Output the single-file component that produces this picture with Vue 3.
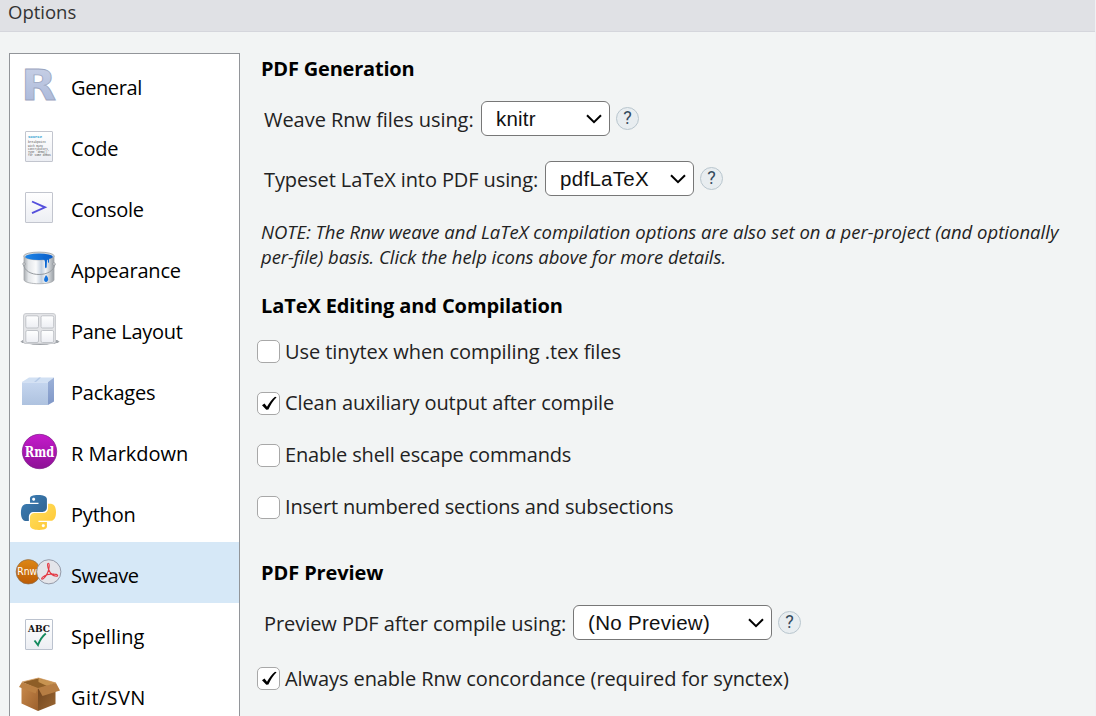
<script setup>
import { ref } from 'vue'

const selected = ref('sweave')
const sections = [
  { id: 'general', label: 'General' },
  { id: 'code', label: 'Code' },
  { id: 'console', label: 'Console' },
  { id: 'appearance', label: 'Appearance' },
  { id: 'panes', label: 'Pane Layout' },
  { id: 'packages', label: 'Packages' },
  { id: 'rmarkdown', label: 'R Markdown' },
  { id: 'python', label: 'Python' },
  { id: 'sweave', label: 'Sweave' },
  { id: 'spelling', label: 'Spelling' },
  { id: 'git', label: 'Git/SVN' },
]
const editing = ref([
  { id: 'tinytex', label: 'Use tinytex when compiling .tex files', on: false },
  { id: 'clean', label: 'Clean auxiliary output after compile', on: true },
  { id: 'shell', label: 'Enable shell escape commands', on: false },
  { id: 'numbered', label: 'Insert numbered sections and subsections', on: false },
])
const concordance = ref(true)
</script>

<template>
  <div class="dialog">
    <header class="title">Options</header>
    <div class="body">
      <nav class="sidebar">
        <div v-for="s in sections" :key="s.id" class="item" :class="[s.id, { active: s.id === selected }]" @click="selected = s.id">
          <svg class="icon" width="61" height="61" viewBox="0 0 61 61">
            <defs>
              <linearGradient :id="s.id + '-paper'" x1="0" y1="0" x2="0" y2="1">
                <stop offset="0" stop-color="#ffffff" /><stop offset="1" stop-color="#eceef3" />
              </linearGradient>
            </defs>
            <template v-if="s.id === 'general'">
              <defs>
                <linearGradient id="rfill" x1="0" y1="0" x2="0" y2="1">
                  <stop offset="0" stop-color="#cbd3e7" /><stop offset="1" stop-color="#a7b5d8" />
                </linearGradient>
              </defs>
              <text x="11.300" y="46.300" class="r-glyph" fill="url(#rfill)" stroke="#9aa5c0" stroke-width=".8" textLength="35" lengthAdjust="spacingAndGlyphs">R</text>
            </template>
            <template v-else-if="s.id === 'code'">
              <rect x="15.5" y="16.500" width="27" height="30" rx=".5" fill="url(#code-paper)" stroke="#c2c5ce" />
              <g class="tiny">
                <text x="18" y="23" class="tiny-head" textLength="14" lengthAdjust="spacingAndGlyphs">source</text>
                <text x="18" y="28.400" textLength="18" lengthAdjust="spacingAndGlyphs">breakpoint</text>
                <text x="18" y="31.600" textLength="15" lengthAdjust="spacingAndGlyphs">with many</text>
                <text x="18" y="34.800" textLength="20" lengthAdjust="spacingAndGlyphs">contributors</text>
                <text x="18" y="38" textLength="21" lengthAdjust="spacingAndGlyphs">Type 'demo()'</text>
                <text x="18" y="41" textLength="23" lengthAdjust="spacingAndGlyphs">for some demos</text>
              </g>
            </template>
            <template v-else-if="s.id === 'console'">
              <rect x="15.500" y="16.500" width="27" height="30" rx=".5" fill="url(#console-paper)" stroke="#c2c5ce" />
              <path d="M22 25.500 35 31.300 22 37.200" fill="none" stroke="#5550dc" stroke-width="1.900" />
            </template>
            <template v-else-if="s.id === 'appearance'">
              <defs>
                <linearGradient id="tin" x1="0" x2="1">
                  <stop offset="0" stop-color="#a9adb1" /><stop offset=".15" stop-color="#e3e6e9" />
                  <stop offset=".4" stop-color="#fafbfc" /><stop offset=".58" stop-color="#c4d0de" />
                  <stop offset=".72" stop-color="#f2f4f6" /><stop offset="1" stop-color="#999fa5" />
                </linearGradient>
                <linearGradient id="paint" x1="0" x2="1">
                  <stop offset="0" stop-color="#1d86e8" /><stop offset="1" stop-color="#0b5dc8" />
                </linearGradient>
              </defs>
              <path d="M14 19v24c1.500 5 28.500 5 30 0V19z" fill="url(#tin)" stroke="#a3a7ab" stroke-width=".8" />
              <ellipse cx="29" cy="19" rx="15.300" ry="3.900" fill="#d8dbdd" stroke="#9b9fa3" stroke-width=".8" />
              <ellipse cx="29" cy="19.700" rx="13.800" ry="3.200" fill="url(#paint)" />
              <path d="M33 20h6v5q-.2 2-1 0l-.2-2q-.7-1-.8 0l-.3 7q-.9 2.500-1.700 0V25q-.3-3-2-3z" fill="#0d68d2" />
              <path d="M36 38c3 3 2.800 6.500 0 7-2.600-.8-2.500-3 0-7" fill="#1673dd" />
              <path d="M13.500 27c1 14 30 14 31.500 0" fill="none" stroke="#969ba0" stroke-width="1" />
              <circle cx="14" cy="27" r="1.200" fill="#fff" stroke="#888d92" stroke-width=".8" />
              <circle cx="44" cy="27" r="1.200" fill="#fff" stroke="#888d92" stroke-width=".8" />
            </template>
            <template v-else-if="s.id === 'panes'">
              <defs>
                <radialGradient id="shade"><stop offset="0" stop-color="#83878c" /><stop offset=".9" stop-color="#a2a6ab" /><stop offset="1" stop-color="#fff" stop-opacity="0" /></radialGradient>
              </defs>
              <ellipse cx="30" cy="43.600" rx="20.500" ry="3.500" fill="url(#shade)" />
              <rect x="13.500" y="15.500" width="32" height="30" rx="2.500" fill="#e3e4e7" stroke="#cbcdd1" />
              <g fill="url(#panes-paper)" stroke="#c0c3c8">
                <rect x="15.800" y="17.800" width="12.700" height="12.200" rx="1.500" /><rect x="31" y="17.800" width="12.700" height="12.200" rx="1.500" />
                <rect x="15.800" y="32.500" width="12.700" height="12" rx="1.500" /><rect x="31" y="32.500" width="12.700" height="12" rx="1.500" />
              </g>
            </template>
            <template v-else-if="s.id === 'packages'">
              <defs>
                <linearGradient id="front" x1="0" y1="0" x2="0" y2="1"><stop offset="0" stop-color="#c5d6ef" /><stop offset="1" stop-color="#aec2df" /></linearGradient>
                <linearGradient id="side" x1="0" y1="0" x2="0" y2="1"><stop offset="0" stop-color="#9cb1d8" /><stop offset="1" stop-color="#7f97c7" /></linearGradient>
              </defs>
              <path d="M12 23 19 18.500H44L38 23z" fill="#d1e0f3" />
              <path d="M24 23 29 18.500h2L26 23z" fill="#b3c8e6" />
              <path d="M12 23H38V46H12z" fill="url(#front)" />
              <path d="M38 23 44 18.500V42.500L38 46z" fill="url(#side)" />
              <path d="M12 23.400H38" stroke="#dbe6f5" stroke-width=".8" />
            </template>
            <template v-else-if="s.id === 'rmarkdown'">
              <defs>
                <linearGradient id="plum" x1="0" y1="0" x2="0" y2="1"><stop offset="0" stop-color="#c41acb" /><stop offset="1" stop-color="#8e1196" /></linearGradient>
              </defs>
              <circle cx="29.500" cy="31.500" r="17.200" fill="url(#plum)" stroke="#7d1d86" stroke-width=".7" />
              <text x="14.800" y="36.500" class="rmd" textLength="29.400" lengthAdjust="spacingAndGlyphs">Rmd</text>
            </template>
            <template v-else-if="s.id === 'python'">
              <defs>
                <linearGradient id="pyblue" x1="0" y1="0" x2="1" y2="1"><stop offset="0" stop-color="#3d80b8" /><stop offset="1" stop-color="#2d5e8b" /></linearGradient>
                <linearGradient id="pyyellow" x1="0" y1="0" x2="1" y2="1"><stop offset="0" stop-color="#ffe060" /><stop offset="1" stop-color="#ffc632" /></linearGradient>
              </defs>
              <g transform="translate(11 14) scale(1.455)">
                <path fill="url(#pyblue)" d="M14.250.18l.9.200.730.260.590.300.450.320.340.340.250.340.160.330.100.300.040.260.020.200-.010.130V8.500l-.050.630-.130.550-.210.460-.260.380-.300.310-.330.250-.350.190-.350.140-.330.100-.300.070-.260.040-.210.020H8.770l-.690.050-.590.140-.500.220-.410.270-.330.320-.270.350-.200.360-.150.370-.100.350-.070.320-.040.270-.020.210v3.060H3.170l-.210-.030-.280-.070-.320-.120-.350-.180-.360-.260-.360-.360-.350-.460-.320-.590-.280-.730-.210-.880-.140-1.050-.050-1.230.060-1.220.160-1.040.240-.870.320-.710.360-.570.400-.440.420-.330.420-.240.400-.160.360-.100.320-.050.240-.010h.160l.060.010h8.160v-.830H6.180l-.010-2.750-.020-.370.050-.340.110-.310.170-.280.250-.260.310-.230.380-.200.440-.180.510-.150.580-.120.640-.100.710-.060.770-.040.840-.020 1.270.050zm-6.300 1.980l-.230.330-.080.410.080.410.230.340.330.220.410.090.410-.090.330-.220.230-.340.080-.410-.080-.410-.230-.330-.330-.220-.410-.090-.410.090z" />
                <path fill="url(#pyyellow)" d="M21.040 6.110l.280.060.320.120.350.180.360.270.360.350.350.470.320.590.280.730.210.880.140 1.040.050 1.230-.060 1.230-.160 1.040-.240.860-.320.710-.360.570-.400.450-.420.330-.420.240-.400.160-.360.090-.320.050-.240.020-.160-.010h-8.220v.820h5.840l.010 2.760.020.360-.050.340-.110.310-.170.290-.250.250-.310.240-.380.200-.440.170-.510.150-.580.130-.640.090-.710.070-.770.040-.840.010-1.270-.040-1.070-.140-.900-.200-.730-.250-.590-.300-.450-.330-.340-.340-.250-.340-.160-.330-.100-.300-.040-.250-.020-.200.010-.130v-5.340l.050-.640.130-.540.210-.460.260-.380.300-.320.330-.240.350-.200.350-.140.330-.100.300-.060.260-.040.210-.020.130-.010h5.840l.690-.050.590-.140.500-.210.410-.280.330-.320.270-.350.200-.360.150-.360.100-.350.070-.320.040-.280.020-.210V6.070h2.090l.140.010zm-6.470 14.250l-.230.330-.080.410.080.410.230.330.330.230.410.080.410-.080.330-.230.230-.330.080-.410-.080-.410-.230-.330-.330-.230-.410-.080-.410.080z" />
              </g>
            </template>
            <template v-else-if="s.id === 'sweave'">
              <defs>
                <linearGradient id="rust" x1="0" y1="0" x2="0" y2="1"><stop offset="0" stop-color="#dd8716" /><stop offset="1" stop-color="#bd5c05" /></linearGradient>
              </defs>
              <circle cx="18.300" cy="29.800" r="12.200" fill="url(#rust)" stroke="#8c6c49" stroke-width=".7" />
              <text x="7.200" y="33.400" class="rnw" textLength="20" lengthAdjust="spacingAndGlyphs">Rnw</text>
              <circle cx="38.800" cy="29.800" r="12.100" fill="#e4e5ea" stroke="#818796" stroke-width=".8" />
              <path d="M38.400 21.300c-1.300 0-.9 3.500.3 6.200-1 3.900-3.200 7.400-5.500 9.300-1.800 1-2.200-.4-.6-1.700 3.200-2.400 7.700-3.400 11.500-3 3.700.1 4.600 2.100 2.300 2.200-3.500-.4-6.600-3.600-7.700-6.800.7-3 .8-6.200-.3-6.200z" fill="none" stroke="#e43842" stroke-width="1.100" />
            </template>
            <template v-else-if="s.id === 'spelling'">
              <rect x="15.500" y="16.500" width="27" height="30" rx=".5" fill="url(#spelling-paper)" stroke="#bbc2ce" />
              <text x="18" y="29" class="abc" textLength="22" lengthAdjust="spacingAndGlyphs">ABC</text>
              <path d="M24.500 37.500 28 42C29.500 38 32 33.500 35.800 30.500" fill="none" stroke="#158a5f" stroke-width="1.900" />
            </template>
            <template v-else>
              <defs>
                <linearGradient id="boxl" x1="0" y1="0" x2="1" y2="1"><stop offset="0" stop-color="#c98a4c" /><stop offset="1" stop-color="#9c602c" /></linearGradient>
                <linearGradient id="boxr" x1="0" y1="0" x2="1" y2="1"><stop offset="0" stop-color="#6e431d" /><stop offset="1" stop-color="#9b6733" /></linearGradient>
              </defs>
              <path d="M12 18 28.500 14 46 19 28 25z" fill="#8e5e27" />
              <path d="M28.500 14.500V18L37 22 46 19z" fill="#c79350" />
              <path d="M11.500 20 28 25V47L11.500 39.500z" fill="url(#boxl)" />
              <path d="M28 25 45.500 20V40L28 47z" fill="url(#boxr)" />
              <path d="M12 18 28 24 25.500 29.500 9 23z" fill="#bc8144" />
              <path d="M28 24 46 19 50 26.500 32.500 32z" fill="#b67d43" />
              <path d="M12 18 28.500 14 46 19" fill="none" stroke="#d5a064" stroke-width=".8" />
            </template>
          </svg>
          <span class="name">{{ s.label }}</span>
        </div>
      </nav>

      <main class="panel">
        <h2 class="h-gen">PDF Generation</h2>
        <div class="field first">
          <label class="l-weave">Weave Rnw files using:</label>
          <div class="select knitr"><span>knitr</span><svg width="18" height="12" viewBox="0 0 18 12"><path d="M2 2.200 9 9.200 16 2.200" /></svg></div>
          <span class="help">?</span>
        </div>
        <div class="field second">
          <label class="l-type">Typeset LaTeX into PDF using:</label>
          <div class="select latex"><span>pdfLaTeX</span><svg width="18" height="12" viewBox="0 0 18 12"><path d="M2 2.200 9 9.200 16 2.200" /></svg></div>
          <span class="help">?</span>
        </div>
        <p class="note"><span class="n1">NOTE: The Rnw weave and LaTeX compilation options are also set on a per-project (and optionally</span><br /><span class="n2">per-file) basis. Click the help icons above for more details.</span></p>
        <h2 class="h-edit">LaTeX Editing and Compilation</h2>
        <div class="checks">
          <div v-for="c in editing" :key="c.id" class="check" @click="c.on = !c.on">
            <span class="box"><svg v-if="c.on" width="21" height="21" viewBox="0 0 21 21"><path d="M4 12.200 6.500 10.500 9 13.800C11 10 14 6 17 3.800L18.600 4.300C15 8 12.500 12 10.400 16.500L8.300 16.700z" /></svg></span>
            <span :class="'c-' + c.id">{{ c.label }}</span>
          </div>
        </div>
        <h2 class="h-prev">PDF Preview</h2>
        <div class="field first">
          <label class="l-prev">Preview PDF after compile using:</label>
          <div class="select preview"><span>(No Preview)</span><svg width="18" height="12" viewBox="0 0 18 12"><path d="M2 2.200 9 9.200 16 2.200" /></svg></div>
          <span class="help">?</span>
        </div>
        <div class="check last" @click="concordance = !concordance">
          <span class="box"><svg v-if="concordance" width="21" height="21" viewBox="0 0 21 21"><path d="M4 12.200 6.500 10.500 9 13.800C11 10 14 6 17 3.800L18.600 4.300C15 8 12.500 12 10.400 16.500L8.300 16.700z" /></svg></span>
          <span class="c-conc">Always enable Rnw concordance (required for synctex)</span>
        </div>
      </main>
    </div>
  </div>
</template>

<style>
body { background: #f2f4f4; overflow: hidden; }
</style>
<style scoped>
.dialog { box-sizing: border-box; width: 1096px; height: 716px; overflow: hidden; background: #f2f4f4; font: 20px/26px "Segoe UI", "Open Sans", "Noto Sans", sans-serif; color: #222; border-right: 1px solid #f0f1f4; letter-spacing: -.1px; white-space: nowrap; }
.title { box-sizing: border-box; height: 32px; background: #e0e1e5; border-bottom: 1px solid #d5d6dc; padding: 0 0 0 8px; font-size: 18.500px; line-height: 23px; color: #333; letter-spacing: 0; }
.body { display: flex; padding-left: 9px; }
.sidebar { box-sizing: border-box; width: 231px; height: 690px; margin-top: 21px; border: 1px solid #929599; background: #fff; overflow: hidden; flex: none; }
.item { display: flex; align-items: center; height: 61px; color: #000; letter-spacing: -.2px; }
.general, .sweave { letter-spacing: -.4px; }
.console { letter-spacing: -.3px; }
.panes { letter-spacing: -.3px; }
.rmarkdown { letter-spacing: 0; }
.spelling { letter-spacing: .1px; }
.git { letter-spacing: .4px; }
.active { background: #d6e8f7; }
.icon { flex: none; }
.name { padding-top: 7px; }
.r-glyph { font: bold 43px "DejaVu Sans", sans-serif; letter-spacing: 0; }
.tiny { font: 3.600px "Liberation Mono", monospace; fill: #555; letter-spacing: 0; }
.tiny-head { font-weight: bold; fill: #1499ce; }
.rmd { font: bold 14px "DejaVu Serif", serif; fill: #fff; letter-spacing: 0; }
.rnw { font: 10px "DejaVu Sans", sans-serif; fill: #fff; letter-spacing: 0; }
.abc { font: bold 9.500px "DejaVu Serif", serif; fill: #111; letter-spacing: 0; }
.panel { flex: 1; padding: 22px 0 0 17px; }
h2 { margin: 0; padding-left: 4px; height: 30px; font-size: 20px; line-height: 30px; color: #000; font-weight: 700; }
.h-gen { letter-spacing: -.2px; }
.h-edit { line-height: 32px; }
.field { display: flex; align-items: center; padding-left: 7px; }
.field label { padding-top: 3px; }
.first { height: 69px; }
.second { height: 51px; }
.select { box-sizing: border-box; height: 35px; border: 1px solid #777; border-radius: 6px; background: #fff; display: flex; align-items: center; justify-content: space-between; padding: 0 6px 0 14px; font: 20.500px "Liberation Sans", sans-serif; color: #111; margin-right: 6px; flex: none; letter-spacing: .3px; }
.select svg path { fill: none; stroke: #000; stroke-width: 2; }
.knitr { width: 129px; letter-spacing: .2px; }
.latex { width: 149px; }
.preview { width: 199px; }
.help { box-sizing: border-box; width: 23px; height: 23px; border: 1.500px solid #b9c6ce; border-radius: 50%; background: #e8edf0; color: #34495c; font: 400 18px/20px Roboto, sans-serif; text-align: center; letter-spacing: 0; }
.l-weave { width: 217px; letter-spacing: -.04px; }
.l-type { width: 281px; letter-spacing: -.1px; }
.l-prev { width: 309px; letter-spacing: -.06px; }
.note { margin: 15px 0 21px; padding-left: 4px; font-size: 18.500px; line-height: 25px; font-style: italic; }
.n1 { letter-spacing: .005px; }
.n2 { letter-spacing: -.04px; }
.check { display: flex; align-items: center; height: 52px; gap: 5px; }
.checks { padding-top: 5px; margin-bottom: 25px; }
.c-tinytex { letter-spacing: -.06px; padding-top: 2px; }
.c-clean { letter-spacing: -.09px; }
.c-shell { letter-spacing: -.15px; }
.c-numbered { letter-spacing: -.17px; }
.c-conc { letter-spacing: -.08px; }
.box { box-sizing: border-box; width: 23px; height: 23px; border: 1px solid #a8a8a8; border-radius: 5px; background: #fff; display: flex; }
.box path { fill: #000; }
.last { height: 43px; }
</style>
